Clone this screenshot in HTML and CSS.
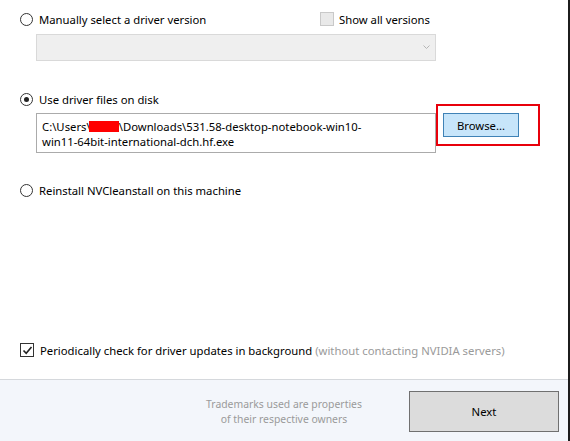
FILE: index.html
```html
<!DOCTYPE html>
<html>
<head>
<meta charset="utf-8">
<link rel="stylesheet" href="styles.css">
</head>
<body>
<div class="window">
  <div class="main">
    <div class="row top-row">
      <label class="opt"><span class="radio"></span><span>Manually select a driver version</span></label>
      <label class="opt showall"><span class="check disabled"></span><span>Show all versions</span></label>
    </div>
    <div class="combo"><svg class="chev" width="7" height="5" viewBox="0 0 7 5"><path d="M0.5 0.5 L3.5 3.5 L6.5 0.5" fill="none" stroke="#b5b5b5" stroke-width="1"/></svg></div>

    <label class="opt opt2"><span class="radio on"></span><span>Use driver files on disk</span></label>
    <div class="filerow">
      <div class="filebox"><span>C:\Users\</span><span class="redact"></span><span>\Downloads\531.58-desktop-notebook-win10-</span><br><span>win11-64bit-international-dch.hf.exe</span></div>
      <div class="highlight"><button class="browse">Browse...</button></div>
    </div>

    <label class="opt opt3"><span class="radio"></span><span>Reinstall NVCleanstall on this machine</span></label>

    <div class="spacer"></div>

    <label class="opt opt4"><span class="check on"><svg width="11" height="11" viewBox="0 0 11 11"><path d="M1.5 5.5 L4.2 8.3 L9.5 2" fill="none" stroke="#222" stroke-width="1.6"/></svg></span><span>Periodically check for driver updates in background <span class="muted">(without contacting NVIDIA servers)</span></span></label>
  </div>
  <div class="footer">
    <div class="tm"><div>Trademarks used are properties</div><div>of their respective owners</div></div>
    <button class="next">Next</button>
  </div>
</div>
</body>
</html>
```
FILE: styles.css
```css
html, body {
  margin: 0;
  padding: 0;
  background: #fff;
}
body {
  font-family: "Noto Sans", "Liberation Sans", sans-serif;
  font-size: 11.3px;
  color: #000;
}
.window {
  width: 568px;
  height: 441px;
  border-right: 2px solid #1c1c1c;
  display: flex;
  flex-direction: column;
  overflow: hidden;
}
.main {
  height: 379px;
  padding: 0 0 0 20px;
  display: flex;
  flex-direction: column;
  box-sizing: border-box;
}
.row {
  display: flex;
  align-items: center;
}
.top-row {
  margin-top: 11px;
  width: 410px;
  justify-content: space-between;
}
.opt {
  display: flex;
  align-items: center;
  gap: 6px;
  line-height: 16px;
  white-space: nowrap;
}
.opt > span:last-child {
  position: relative;
  top: 1px;
}
.radio {
  width: 11px;
  height: 11px;
  border: 1px solid #333;
  border-radius: 50%;
  box-sizing: content-box;
  position: relative;
  flex: none;
}
.radio.on::after {
  content: "";
  position: absolute;
  left: 3px;
  top: 3px;
  width: 5px;
  height: 5px;
  border-radius: 50%;
  background: #222;
}
.check {
  width: 12px;
  height: 12px;
  border: 1px solid #333;
  flex: none;
  display: flex;
  align-items: center;
  justify-content: center;
}
.check.disabled {
  border-color: #c9c9c9;
  background: #e9e9e9;
}
.showall {
  gap: 5px;
}
.combo {
  margin: 7px 0 0 16px;
  width: 400px;
  height: 27px;
  box-sizing: border-box;
  background: #efefef;
  border: 1px solid #d9d9d9;
  display: flex;
  align-items: center;
  justify-content: flex-end;
  padding-right: 5px;
}
.opt2 {
  margin-top: 30px;
}
.filerow {
  display: flex;
  align-items: flex-start;
  margin: 6px 0 0 16px;
}
.filebox {
  width: 400px;
  height: 40px;
  box-sizing: border-box;
  border: 1px solid #ababab;
  padding: 5px 0 0 5px;
  line-height: 15px;
}
.redact {
  display: inline-block;
  width: 30px;
  height: 11px;
  background: #ff0000;
  vertical-align: -1px;
  margin-left: -2px;
}
.highlight {
  margin: -9px 0 0 0;
  width: 104px;
  height: 42px;
  box-sizing: border-box;
  border: 2px solid #e8000b;
  padding: 7px 0 0 5px;
}
.browse {
  width: 76px;
  height: 24px;
  background: #c7e5fa;
  border: 1px solid #3f82b6;
  font-family: inherit;
  font-size: 11.3px;
  color: #000;
  padding: 0;
  margin: 0;
}
.opt3 {
  margin-top: 29px;
}
.spacer {
  flex: 1;
}
.opt4 {
  margin-bottom: 21px;
}
.muted {
  color: #9a9a9a;
}
.footer {
  flex: 1;
  border-top: 1px solid #d5d8dc;
  background: #f3f6fb;
  display: flex;
  align-items: flex-start;
}
.tm {
  margin: 17px 0 0 186px;
  width: 196px;
  text-align: center;
  color: #9a9a9a;
  font-size: 10.4px;
  line-height: 15px;
}
.next {
  margin: 11px 0 0 27px;
  width: 150px;
  height: 41px;
  box-sizing: border-box;
  background: #dcdcdc;
  border: 1px solid #707070;
  font-family: inherit;
  font-size: 11.3px;
  color: #000;
}
```
